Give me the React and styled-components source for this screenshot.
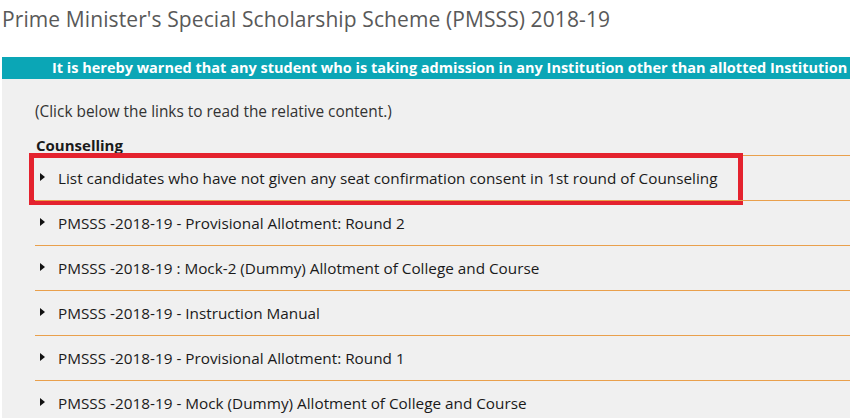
import React from 'react';
import styled, { createGlobalStyle } from 'styled-components';

const colors = {
	title: '#595959',
	teal: '#0ba6b6',
	panel: '#f0f0f0',
	line: '#e9a04c',
	red: '#e4222e',
	text: '#1a1a1a'
};

const GlobalStyle = createGlobalStyle`
	html, body {
		margin: 0;
		padding: 0;
		background: #fff;
		font-family: 'Open Sans', 'Noto Sans', sans-serif;
		overflow: hidden;
	}
`;

const Page = styled.div`
	width: 850px;
	height: 418px;
	overflow: hidden;
`;

const Title = styled.h1`
	margin: 0;
	height: 57px;
	padding: 4px 0 0 2px;
	box-sizing: border-box;
	font-size: 21px;
	font-weight: 400;
	color: ${colors.title};
	line-height: 30px;
	letter-spacing: 0.1px;
`;

const Banner = styled.div`
	margin-left: 2px;
	height: 22px;
	background: ${colors.teal};
	color: #fff;
	font-weight: 700;
	font-size: 14.5px;
	line-height: 22px;
	padding-left: 50px;
	white-space: nowrap;
	overflow: hidden;
`;

const Panel = styled.div`
	margin-left: 2px;
	background: ${colors.panel};
	padding: 22px 0 0 33px;
	height: 400px;
`;

const Hint = styled.p`
	margin: 0;
	font-size: 15.4px;
	color: #333;
	line-height: 22px;
`;

const Heading = styled.h3`
	margin: 13px 0 0 1px;
	font-size: 15px;
	font-weight: 700;
	color: ${colors.text};
	line-height: 19px;
`;

const List = styled.ul`
	list-style: none;
	margin: 0;
	padding: 0;
`;

const Row = styled.li`
	position: relative;
	display: flex;
	align-items: center;
	gap: 13px;
	height: 45px;
	border-top: 1px solid ${colors.line};
	box-sizing: border-box;
	padding-left: 5px;
	font-size: 15.3px;
	color: ${colors.text};

	${({ highlight }) =>
		highlight &&
		`
		&::after {
			content: '';
			position: absolute;
			left: -6px;
			top: -3px;
			width: 714px;
			height: 52px;
			box-sizing: border-box;
			border: 5px solid ${colors.red};
			pointer-events: none;
		}
	`}
`;

const Arrow = styled.span`
	width: 0;
	height: 0;
	border-top: 4px solid transparent;
	border-bottom: 4px solid transparent;
	border-left: 5px solid #111;
	flex-shrink: 0;
	margin-top: -2px;
`;

const links = [
	'List candidates who have not given any seat confirmation consent in 1st round of Counseling',
	'PMSSS -2018-19 - Provisional Allotment: Round 2',
	'PMSSS -2018-19 : Mock-2 (Dummy) Allotment of College and Course',
	'PMSSS -2018-19 - Instruction Manual',
	'PMSSS -2018-19 - Provisional Allotment: Round 1',
	'PMSSS -2018-19 - Mock (Dummy) Allotment of College and Course'
];

const App = () => (
	<Page>
		<GlobalStyle />
		<Title>Prime Minister's Special Scholarship Scheme (PMSSS) 2018-19</Title>
		<Banner>
			It is hereby warned that any student who is taking admission in any Institution other than allotted Institution through counselling will not be eligible.
		</Banner>
		<Panel>
			<Hint>(Click below the links to read the relative content.)</Hint>
			<Heading>Counselling</Heading>
			<List>
				{links.map((link, index) => (
					<Row key={String(index)} highlight={index === 0}>
						<Arrow />
						<span>{link}</span>
					</Row>
				))}
			</List>
		</Panel>
	</Page>
);

export default App;
